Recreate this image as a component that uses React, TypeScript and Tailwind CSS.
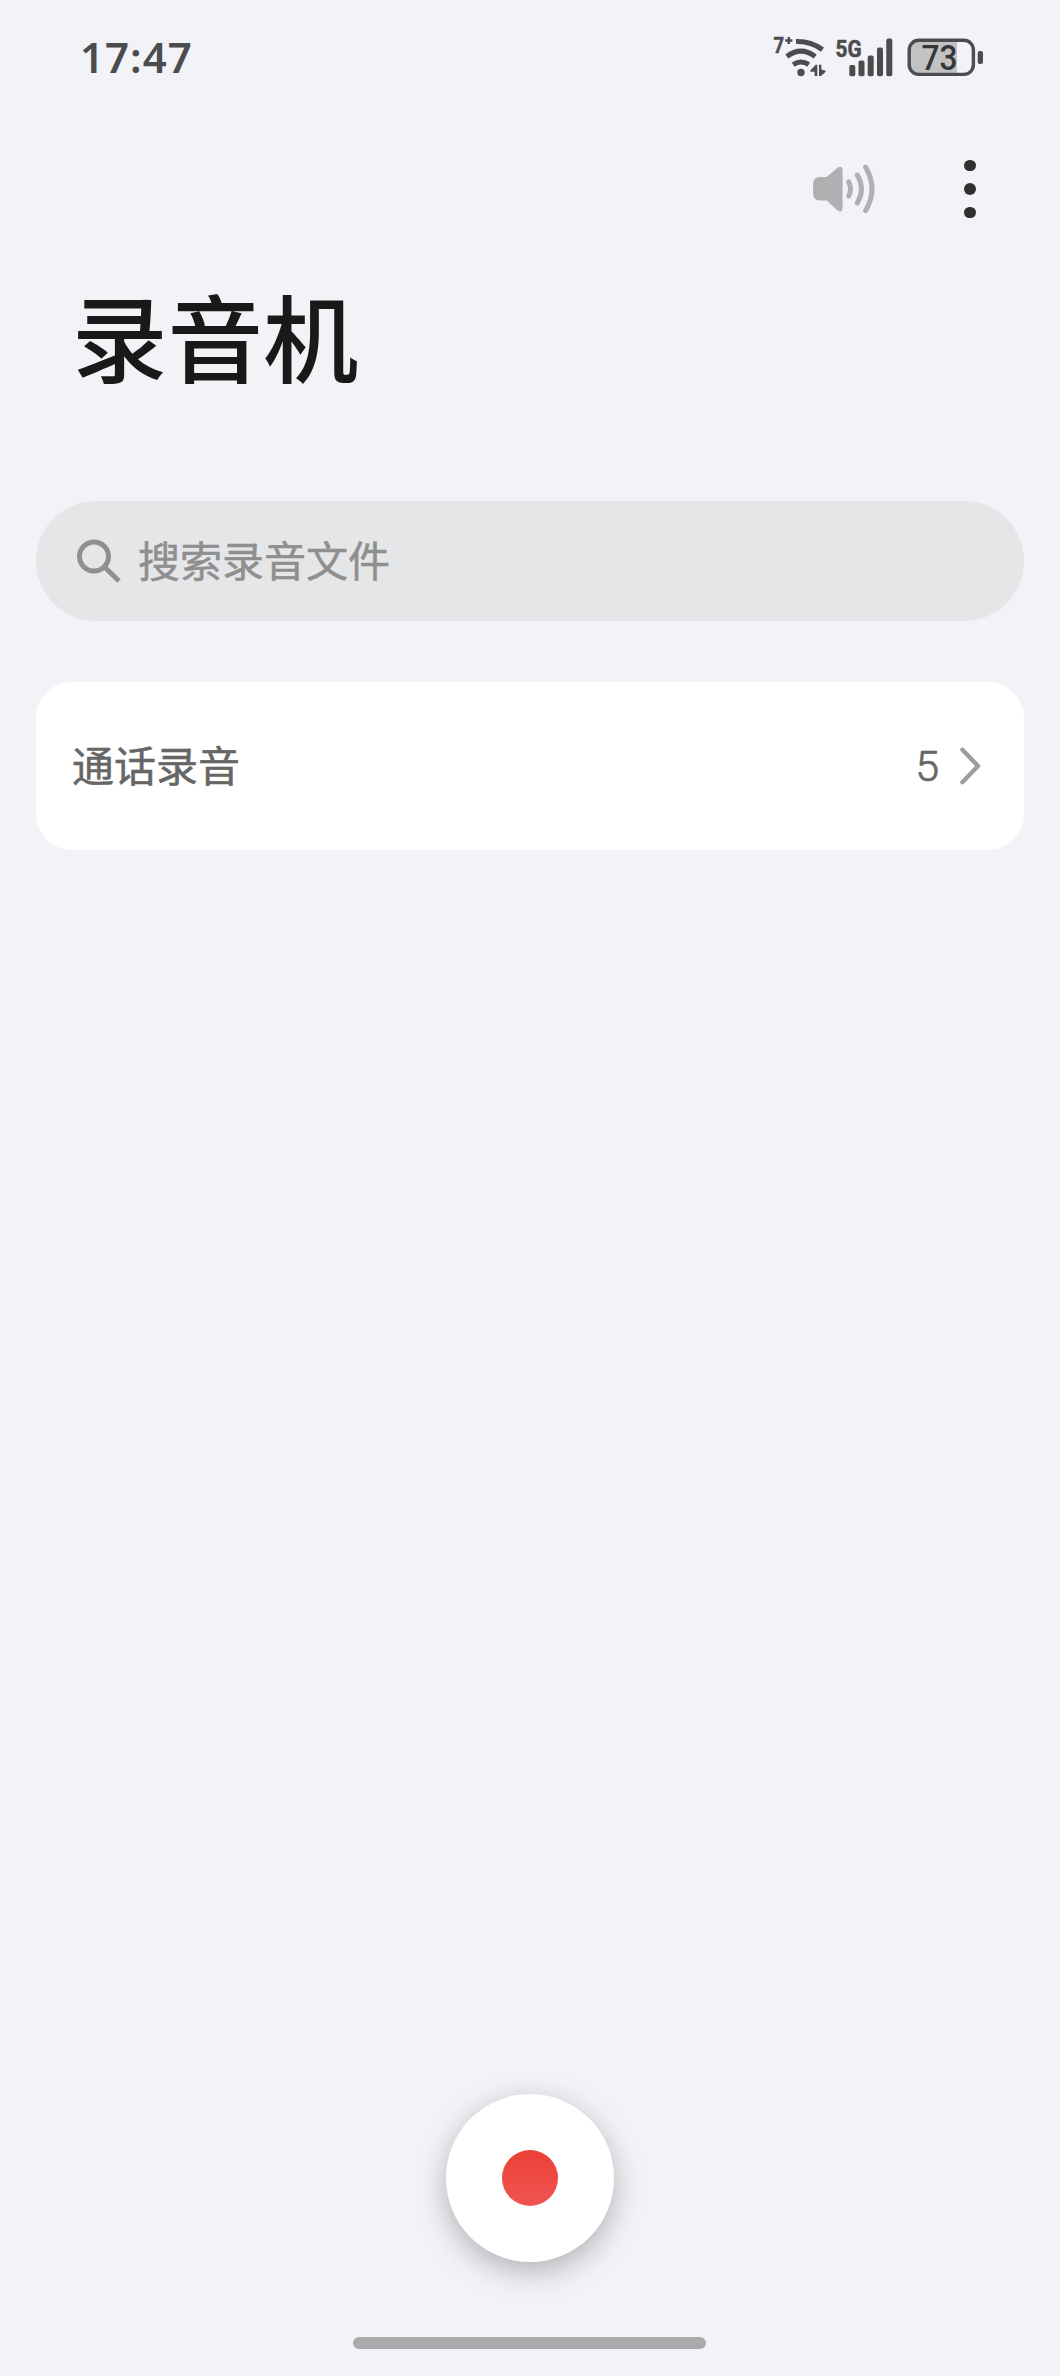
function StatusIcons() {
  return (
    <svg className="h-20 w-60" viewBox="0 0 240 80" fill="none">
      {/* Wi-Fi */}
      <g stroke="#4b4c4d" strokeWidth="5">
        <path d="M36 21.6 C46 21.2 55 24.3 62.5 29.6" />
        <path d="M26.8 36.4 C36 29.6 46 29.6 55.2 36.4" />
        <path d="M33.2 44.6 C38 41.4 44 41.4 48.8 44.6" />
      </g>
      <circle cx="41" cy="52.5" r="3.7" fill="#4b4c4d" />
      <path d="M57.3 44.8 V56 H54.6 V51.8 H50.3 V50.4 L55.6 44.8 Z M59 44.8 H61.2 L61.4 49.4 L65.7 50.8 V51.8 L61 56 H59 Z" fill="#4b4c4d" />
      <text x="13.4" y="32.8" fontFamily="Roboto" fontSize="22" fontWeight="700" fill="#4b4c4d" stroke="#4b4c4d" strokeWidth="0.5" textLength="10.6" lengthAdjust="spacingAndGlyphs">7</text>
      <path d="M25.2 20.5 H32.4 M28.8 16.9 V24.1" stroke="#4b4c4d" strokeWidth="2.4" />
      {/* Mobile signal */}
      <text x="75.6" y="37" fontFamily="Roboto" fontSize="24" fontWeight="700" fill="#4b4c4d" stroke="#4b4c4d" strokeWidth="0.6" textLength="26" lengthAdjust="spacingAndGlyphs">5G</text>
      <g fill="#4b4c4d">
        <rect x="89.3" y="45" width="6" height="11.3" rx="1.8" />
        <rect x="98.5" y="40.6" width="6" height="15.7" rx="1.8" />
        <rect x="107.7" y="35.6" width="6" height="20.7" rx="1.8" />
        <rect x="117" y="27.6" width="6" height="28.7" rx="1.8" />
        <rect x="126.3" y="18.6" width="6" height="37.7" rx="1.8" />
      </g>
      {/* Battery */}
      <path d="M197 21 H159 Q150 21 150 30 V44 Q150 53 159 53 H197 Z" fill="#c2c2c4" />
      <rect x="149.2" y="20.3" width="64.2" height="34.1" rx="9.6" stroke="#4b4c4d" strokeWidth="3.4" />
      <rect x="217.7" y="31" width="5.3" height="13" rx="2" fill="#4b4c4d" />
      <text x="161.6" y="49.8" fontFamily="Roboto" fontSize="34.5" fontWeight="500" fill="#363737" textLength="36" lengthAdjust="spacingAndGlyphs">73</text>
    </svg>
  );
}

function SpeakerIcon() {
  return (
    <svg className="h-18 w-18" viewBox="0 0 72 72" fill="none">
      <path d="M12 24 H18.6 L29 15.2 Q34.6 11.4 34.6 18 V54.4 Q34.6 61 29 57 L18.6 47.4 H12 Q5.1 47.4 5.1 40.6 V31 Q5.1 24 12 24 Z" fill="#b0b0b2" />
      <g stroke="#b0b0b2" strokeWidth="5" strokeLinecap="round">
        <path d="M40.7 28.9 Q44.3 36 40.7 43" />
        <path d="M49.3 22 Q57.6 36 49.3 50" />
        <path d="M57.6 14.2 Q70.4 36 57.6 57.6" />
      </g>
    </svg>
  );
}

export default function App() {
  return (
    <div className="flex h-[2376px] w-[1060px] flex-col bg-[#f1f3f7] font-['Noto_Sans_CJK_SC',sans-serif]">
      <header className="flex h-[114px] items-start justify-between pr-15 pl-20 pt-5">
        <span className="mt-[9px] font-['Noto_Sans'] text-[42px] leading-[56px] font-semibold tracking-[1px] text-[#4b4c4d]">17:47</span>
        <StatusIcons />
      </header>

      <div className="flex h-[150px] items-start justify-end pt-[39px] pr-[60px]">
        <button aria-label="扬声器" className="mr-[60px]">
          <SpeakerIcon />
        </button>
        <button aria-label="更多" className="flex h-18 w-[60px] flex-col items-center justify-center gap-3">
          <span className="size-[11.5px] rounded-full bg-[#2f3131]" />
          <span className="size-[11.5px] rounded-full bg-[#2f3131]" />
          <span className="size-[11.5px] rounded-full bg-[#2f3131]" />
        </button>
      </div>

      <h1 className="h-[237px] pt-[1px] pl-[72px] text-[95.5px] leading-[140px] font-medium text-[#191919]">录音机</h1>

      <div className="mx-9 flex h-30 items-center rounded-full bg-[#e5e6e8] pl-10">
        <svg className="size-[46px]" viewBox="0 0 46 46" fill="none" stroke="#8f8f90" strokeWidth="5">
          <circle cx="18" cy="18.5" r="14.5" />
          <path d="M28.5 29 L43 43" />
        </svg>
        <span className="mb-[5px] ml-4 text-[42px] leading-[60px] text-[#8f8f90] [-webkit-text-stroke:0.5px_#8f8f90]">搜索录音文件</span>
      </div>

      <div className="mx-9 mt-[61px] flex h-42 items-center rounded-[36px] bg-white pl-9 text-[42px] leading-[60px] text-[#666]">
        <span className="mb-[5px] [-webkit-text-stroke:0.5px_#666]">通话录音</span>
        <span className="ml-auto font-['Roboto'] text-[43px] font-light [-webkit-text-stroke:0.7px_#666]">5</span>
        <svg className="mr-[42px] ml-[19px] h-[42px] w-6" viewBox="0 0 24 42" fill="none" stroke="#9d9d9d" strokeWidth="4.4" strokeLinecap="round" strokeLinejoin="round">
          <path d="M4.4 4.8 L20 21 L4.4 37.2" />
        </svg>
      </div>

      <button aria-label="录音" className="mt-auto flex size-42 items-center justify-center self-center rounded-full bg-white shadow-[0_9px_30px_rgba(0,0,0,0.27)]">
        <span className="size-14 rounded-full bg-linear-to-b from-[#ec3f38] to-[#ef5450]" />
      </button>
      <div className="mt-[75px] mb-[27px] ml-[353px] h-3 w-[353px] rounded-full bg-[#aaaaac]" />
    </div>
  );
}
